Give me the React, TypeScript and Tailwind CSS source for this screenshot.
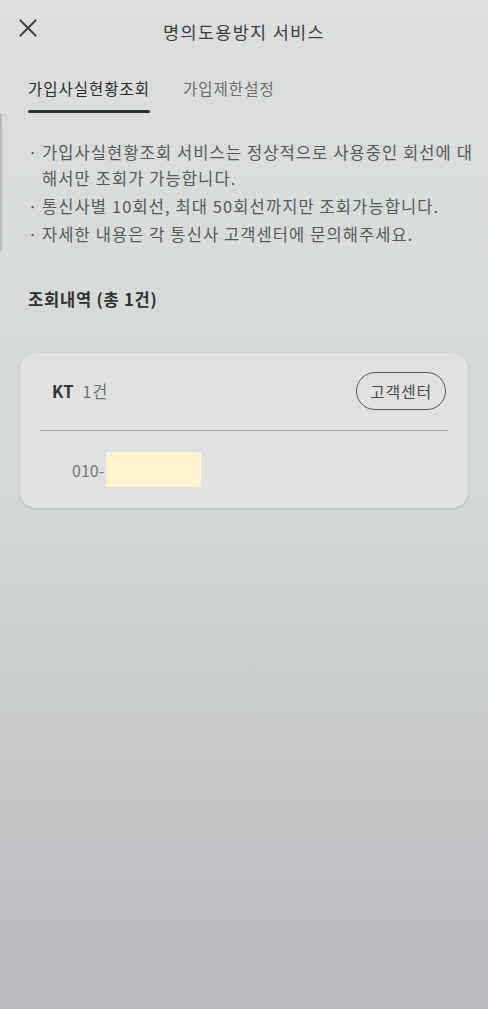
import { X } from "lucide-react";

const notices = [
  ["가입사실현황조회 서비스는 정상적으로 사용중인 회선에 대", "해서만 조회가 가능합니다."],
  ["통신사별 10회선, 최대 50회선까지만 조회가능합니다."],
  ["자세한 내용은 각 통신사 고객센터에 문의해주세요."],
];

export default function App() {
  return (
    <div className="min-h-screen w-full bg-gradient-to-b from-[#dcdfde] via-[#d3d7d6] to-[#b8b8bc] font-['Noto_Sans_CJK_KR','Noto_Sans',sans-serif] text-[#3a3c3c]">
      <header className="grid h-[60px] grid-cols-[60px_1fr_60px] items-center">
        <button className="flex h-[60px] items-center justify-center pb-[4px] pr-[4px] text-[#434545]">
          <X size={30} strokeWidth={1.7} />
        </button>
        <h1 className="pt-[4px] text-center text-[17.5px] tracking-[1.3px] text-[#3e4040]">
          명의도용방지 서비스
        </h1>
        <div />
      </header>

      <nav className="flex h-[53px] gap-[33px] px-[28px]">
        <div className="flex flex-col justify-end">
          <span className="pb-[10px] text-[15.5px] tracking-[1px] text-[#2b2d2d]">가입사실현황조회</span>
          <div className="h-[3px] rounded-full bg-[#2f3232]" />
        </div>
        <div className="flex flex-col justify-end">
          <span className="pb-[13px] text-[15.5px] tracking-[1px] text-[#6a6c6c]">가입제한설정</span>
        </div>
      </nav>

      <section className="border-l-2 border-[#b9bcbb] pb-[4px] pl-[26px] pt-[26px]">
        <ul className="flex flex-col gap-[2px] text-[16.5px] leading-[26px] tracking-[1.1px] text-[#565958]">
          {notices.map((lines, i) => (
            <li key={i} className="flex whitespace-nowrap">
              <span className="w-[14px] shrink-0">·</span>
              <span>
                {lines.map((line, j) => (
                  <span key={j} className="block">
                    {line}
                  </span>
                ))}
              </span>
            </li>
          ))}
        </ul>
      </section>

      <h2 className="mt-[36px] px-[28px] text-[16.5px] font-bold leading-[24px] tracking-[0.8px] text-[#2f3131]">
        조회내역 (총 1건)
      </h2>

      <div className="mx-[20px] mt-[42px] rounded-[16px] bg-[#e0e2e1] shadow-[0_1px_3px_rgba(0,0,0,0.12)]">
        <div className="flex items-center justify-between pb-[20px] pl-[32px] pr-[22px] pt-[19px]">
          <div className="flex items-baseline gap-[8px] text-[16.5px]">
            <span className="font-bold tracking-[0.5px] text-[#333535]">KT</span>
            <span className="tracking-[1px] text-[#6f7171]">1건</span>
          </div>
          <button className="h-[38px] rounded-full border-[1.5px] border-[#555857] px-[13px] text-[16px] tracking-[0.8px] text-[#4a4c4c]">
            고객센터
          </button>
        </div>
        <div className="mx-[20px] h-px bg-[#9fa2a1]" />
        <div className="flex items-center pb-[21px] pl-[52px] pt-[21px]">
          <span className="text-[16px] text-[#737575]">010-</span>
          <div className="ml-[2px] h-[35px] w-[95px] bg-[#fff2cf]" />
        </div>
      </div>
    </div>
  );
}
